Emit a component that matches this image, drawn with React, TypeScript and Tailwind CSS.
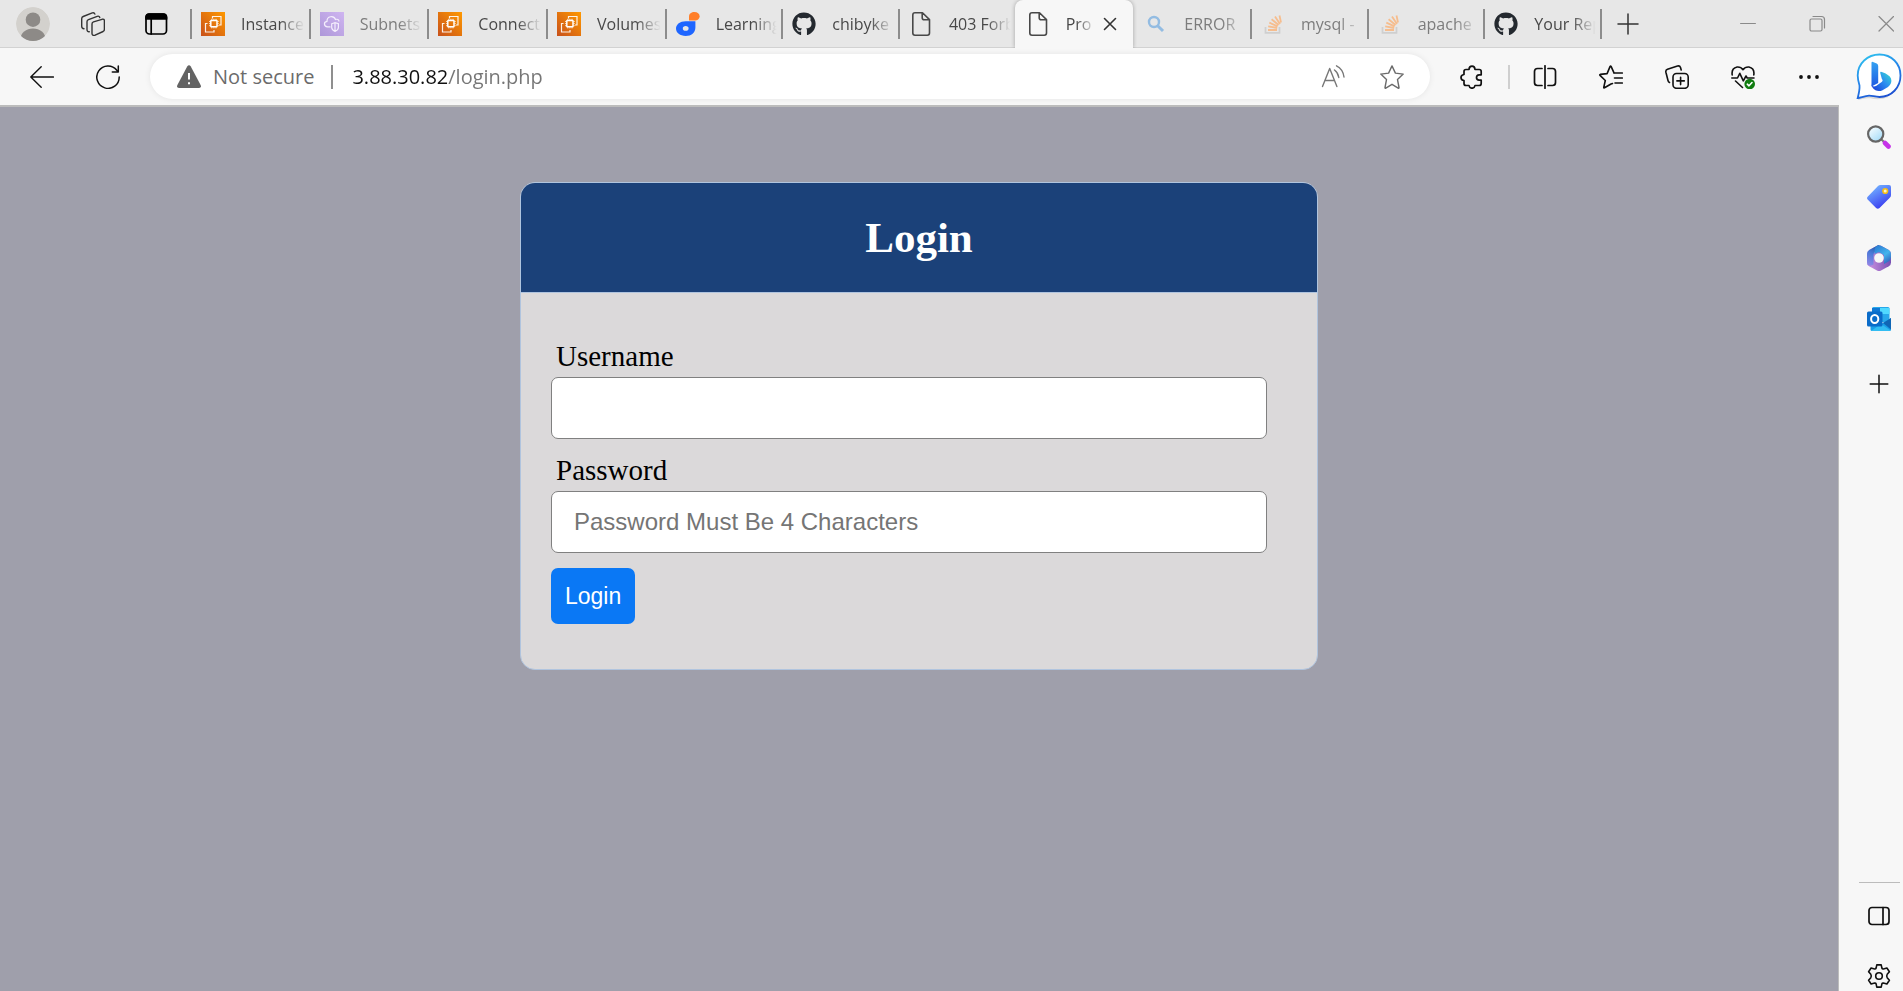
import { useState, type ReactNode } from "react";
import { FaGithub } from "react-icons/fa";

type SvgProps = { children: ReactNode; size?: string; box?: string; stroke?: string };

function Line({ children, size = "size-6", box = "0 0 24 24", stroke = "1.5" }: SvgProps) {
  return (
    <svg
      className={`${size} shrink-0`}
      viewBox={box}
      fill="none"
      stroke="currentColor"
      strokeWidth={stroke}
      strokeLinecap="round"
      strokeLinejoin="round"
      aria-hidden="true"
    >
      {children}
    </svg>
  );
}

function Ec2Icon() {
  return (
    <svg className="size-6" viewBox="0 0 24 24" fill="none" aria-hidden="true">
      <defs>
        <linearGradient id="ec2" x1="0" y1="24" x2="24" y2="0" gradientUnits="userSpaceOnUse">
          <stop stopColor="#c8511b" />
          <stop offset="1" stopColor="#ff9900" />
        </linearGradient>
      </defs>
      <rect width="24" height="24" fill="url(#ec2)" />
      <path d="M11.5 6.500V4.500H20V13h-2M6.500 11.500h-2V20H13v-2" stroke="#fff" strokeOpacity=".9" strokeWidth="1.200" />
      <rect x="9.800" y="8.500" width="6.200" height="6.200" rx=".5" stroke="#fff" strokeWidth="1.500" />
      <path
        d="M10.800 8V6.800M12.900 8V6.800M15 8V6.800M10.800 16.400v-1.200M12.900 16.400v-1.200M15 16.400v-1.200M9.300 9.500H8.100M9.300 11.600H8.100M9.300 13.700H8.100M17.700 9.500h-1.200M17.700 11.600h-1.200M17.700 13.700h-1.200"
        stroke="#fff"
        strokeWidth=".8"
      />
    </svg>
  );
}

function VpcIcon() {
  return (
    <svg className="size-6" viewBox="0 0 24 24" fill="none" aria-hidden="true">
      <defs>
        <linearGradient id="vpc" x1="0" y1="24" x2="24" y2="0" gradientUnits="userSpaceOnUse">
          <stop stopColor="#ad97d8" />
          <stop offset="1" stopColor="#cfb5f1" />
        </linearGradient>
      </defs>
      <rect width="24" height="24" fill="url(#vpc)" />
      <path
        d="M10.500 14.800H7.600C3.500 14.500 3.500 9.800 7 9.300 6.800 4 13.700 3 15.500 7.500 17.500 6.800 18.900 7.800 19 9.500"
        stroke="#f4eefc"
        strokeWidth="1.200"
      />
      <path d="M11.700 11.700 15 10.700 18.400 11.700V15.500C18.400 17.500 16.700 18.700 15 19.400 13.400 18.700 11.700 17.500 11.700 15.500ZM15 11V19" stroke="#f4eefc" strokeWidth="1.200" />
    </svg>
  );
}

function LearnIcon() {
  return (
    <svg className="size-6" viewBox="0 0 24 24" aria-hidden="true">
      <path d="M13 4.500C13 1.700 15.500 0 18.400 0 21.500 0 23.600 1.700 23.600 4.200 23.600 7 21.300 8.500 18.500 8.500H13Z" fill="#ff7f2a" />
      <path
        fillRule="evenodd"
        d="M9.700 9.200H19.400V15.500C19.400 20.500 15.300 24 9.700 24 4 24 0 21 0 16.600 0 12.300 4 9.200 9.700 9.200ZM9.700 14.100C7.900 14.100 6.800 15 6.800 16.400S7.900 18.800 9.700 18.800 12.600 17.800 12.600 16.400 11.500 14.100 9.700 14.100Z"
        fill="#1f66ff"
      />
    </svg>
  );
}

function GithubIcon() {
  return <FaGithub className="size-6 text-[#24292f]" aria-hidden="true" />;
}

function PageIcon() {
  return (
    <Line stroke="1.6">
      <path d="M6 .8h7.500l7 6.800v13.400q0 2.200-2.200 2.200H6q-2.200 0-2.200-2.200V3Q3.800.8 6 .8ZM13.200 1v4.800q0 2 2 2h5" />
    </Line>
  );
}

function SearchTabIcon() {
  return (
    <svg className="size-6" viewBox="0 0 24 24" fill="none" stroke="#93bce2" aria-hidden="true">
      <circle cx="10" cy="10" r="5" strokeWidth="2.400" />
      <path d="m13.700 13.700 5.300 5.300" strokeWidth="3" />
    </svg>
  );
}

function StackIcon() {
  return (
    <svg className="size-6" viewBox="0 0 24 24" fill="none" aria-hidden="true">
      <path d="M4.500 15v5.800h14V15" stroke="#cfcfcf" strokeWidth="1.700" />
      <path
        d="M7 18h9M7.200 14.300l9 1.700M8.300 10.600l8.300 3.800M10.600 7.200l7 5.800M14 4.600l5 7.400M18.500 3.500l1.500 7"
        stroke="#f6bd8e"
        strokeWidth="1.800"
      />
    </svg>
  );
}

type Tab = { title: string; icon: ReactNode; active?: boolean; faded?: boolean; wide?: boolean };

const tabs: Tab[] = [
  { title: "Instances", icon: <Ec2Icon />, wide: true },
  { title: "Subnets", icon: <VpcIcon />, faded: true, wide: true },
  { title: "Connect", icon: <Ec2Icon />, wide: true },
  { title: "Volumes", icon: <Ec2Icon />, wide: true },
  { title: "Learning", icon: <LearnIcon /> },
  { title: "chibyke", icon: <GithubIcon /> },
  { title: "403 Forb", icon: <PageIcon /> },
  { title: "Pro", icon: <PageIcon />, active: true, wide: true },
  { title: "ERROR", icon: <SearchTabIcon />, faded: true },
  { title: "mysql -", icon: <StackIcon />, faded: true },
  { title: "apache", icon: <StackIcon />, faded: true },
  { title: "Your Rep", icon: <GithubIcon /> },
];

function Divider() {
  return <span className="h-[30px] w-[2px] shrink-0 bg-[#8c8c8c]" />;
}

function TabStrip() {
  return (
    <header className="flex h-12 shrink-0 bg-[#e7e7e7] shadow-[inset_0_-1px_0_#d2d2d2]">
      <div className="flex shrink-0 items-center pl-4 text-[#333]">
        <button aria-label="Profile" className="size-[34px]">
          <svg viewBox="0 0 34 34" aria-hidden="true">
            <defs>
              <clipPath id="avatar">
                <circle cx="17" cy="17" r="17" />
              </clipPath>
            </defs>
            <g clipPath="url(#avatar)">
              <circle cx="17" cy="17" r="17" fill="#d3d1cd" />
              <circle cx="17" cy="12.700" r="7.300" fill="#8d8a87" />
              <ellipse cx="17" cy="32" rx="12.500" ry="10.500" fill="#8d8a87" />
            </g>
          </svg>
        </button>
        <button aria-label="Workspaces" className="ml-[31px]">
          <Line stroke="1.400">
            <path d="M11 12q0-1.600 1.500-2.100l8.500-2.600q2.400-.6 2.400 1.700v8.300q0 1.500-1.300 2.200l-8 3.700Q11 24 11 21.600ZM8.300 19.800Q6 20 6 17.600V9.800q0-1.600 1.500-2.200l8.700-3.300q2-.6 2.600 1.200M3 16.700Q.7 16.700.7 14.300V6.700q0-1.600 1.500-2.200L11.300.9q2-.6 2.600 1.200" />
          </Line>
        </button>
        <button aria-label="Tab actions" className="ml-[39px] text-black">
          <Line stroke="1.700">
            <rect x="2" y="2" width="20.500" height="20" rx="3.500" />
            <path d="M2 7V5q0-3 3-3h14.500q3 0 3 3v2Z" fill="currentColor" />
            <path d="M7.200 7v15" />
          </Line>
        </button>
        <span className="w-[22px]" />
      </div>
      <nav className="flex min-w-0 max-w-[1410px] flex-1 items-stretch" aria-label="Tabs">
        {tabs.map((tab, i) => (
          <div
            key={i}
            className={`flex min-w-0 items-center ${tab.wide ? "flex-[119]" : "flex-[117]"} ${
              tab.active
                ? "z-10 rounded-t-lg bg-[#f7f7f7] shadow-[0_0_4px_rgba(0,0,0,0.3)] [clip-path:inset(-2px_-4px_0_-4px)]"
                : ""
            }`}
          >
            {tab.active || tabs[i - 1]?.active ? <span className="w-[2px] shrink-0" /> : <Divider />}
            <a
              href="#"
              className={`ml-[9px] flex min-w-0 flex-1 items-center gap-4 ${tab.faded ? "text-[#7c7c7c]" : "text-[#484848]"}`}
            >
              <span className="shrink-0">{tab.icon}</span>
              <span
                className={`min-w-0 flex-1 overflow-hidden text-base leading-6 whitespace-nowrap ${
                  tab.active
                    ? "[mask-image:linear-gradient(to_right,black_40%,transparent_120%)]"
                    : "[mask-image:linear-gradient(to_right,black_60%,transparent_98%)]"
                }`}
              >
                {tab.title}
              </span>
            </a>
            {tab.active ? (
              <button aria-label="Close tab" className="mr-4 ml-3 text-[#333]">
                <Line size="size-[14px]" box="0 0 14 14" stroke="1.600">
                  <path d="m1.500 1.500 11 11m0-11-11 11" />
                </Line>
              </button>
            ) : (
              <span className="w-[3px] shrink-0" />
            )}
          </div>
        ))}
      </nav>
      <div className="flex items-center">
        <Divider />
      </div>
      <button aria-label="New tab" className="ml-[14px] text-[#333]">
        <Line stroke="1.500">
          <path d="M12 2v20M2 12h20" />
        </Line>
      </button>
      <div className="ml-auto flex shrink-0 items-center gap-[52px] pr-[9px] text-[#8a8a8a]">
        <button aria-label="Minimize">
          <Line size="size-4" box="0 0 16 16" stroke="1.200">
            <path d="M.6 7.500h14.800" />
          </Line>
        </button>
        <button aria-label="Restore">
          <Line size="size-[18px]" box="0 0 18 18" stroke="1.200">
            <rect x="2" y="4" width="12" height="12" rx="1.500" />
            <path d="M5 1.500h8.500q3 0 3 3V13" />
          </Line>
        </button>
        <button aria-label="Close window">
          <Line size="size-4" box="0 0 16 16" stroke="1.200">
            <path d="m1 .5 14.500 14.500m0-14.500L1 15" />
          </Line>
        </button>
      </div>
    </header>
  );
}

function Toolbar() {
  return (
    <div className="flex h-[57px] shrink-0 items-center bg-[#f7f7f7] pr-[18px] text-[#111]">
      <button aria-label="Back" className="ml-[30px]">
        <Line stroke="1.400">
          <path d="M.8 12h22.600M11.200 1.800.8 12l10.400 10.200" />
        </Line>
      </button>
      <button aria-label="Refresh" className="ml-[42px]">
        <Line stroke="1.500">
          <path d="M23.200 12A11.200 11.200 0 1 1 20.800 5.200L22.300 7M22.300 1v6h-6" />
        </Line>
      </button>
      <div className="ml-[30px] flex h-[45px] min-w-0 flex-1 items-center rounded-full bg-white pr-[26px] pl-[27px] text-xl shadow-[0_0_6px_rgba(0,0,0,0.08)]">
        <button className="flex shrink-0 items-center gap-3 text-[#6b6b6b]">
          <svg className="size-6" viewBox="0 0 24 24" aria-hidden="true">
            <path d="M10.200 1.500q1.800-2.600 3.600 0L23.600 20q1.200 3-1.600 3H2q-2.800 0-1.600-3Z" fill="#636363" />
            <path d="M12 8v6.500M12 17.300v2" stroke="#fff" strokeWidth="2" />
          </svg>
          Not secure
        </button>
        <span className="mr-[19px] ml-[17px] h-6 w-[2px] shrink-0 bg-[#8f8f8f]" />
        <input
          aria-label="Address"
          defaultValue="3.88.30.82/login.php"
          className="min-w-0 flex-1 bg-linear-[to_right,#111_95px,#757575_95px] bg-clip-text text-transparent outline-none"
        />
        <button aria-label="Read aloud" className="text-[#777]">
          <Line stroke="1.400">
            <path d="M1.500 21.500 8.700 3.500l7.200 18M4 15.500h9.500M13.500 5q3.500 2.500 4.300 7.500M15.500.8q6.500 3.200 7.500 11.200" />
          </Line>
        </button>
        <button aria-label="Add to favorites" className="ml-[35px] text-[#6b6b6b]">
          <Line stroke="1.400">
            <path d="m12 .9 3.400 7.200 7.800 1-5.700 5.500 1.500 7.900q.1 1-.8.6L12 19.300l-6.200 3.800q-.9.4-.8-.6l1.500-7.900L.8 9.100l7.800-1Z" />
          </Line>
        </button>
      </div>
      <button aria-label="Extensions" className="ml-[30px]">
        <Line stroke="1.700">
          <path d="M6 4.500h3q.2-3.300 3-3.300t3 3.300h4.200q2 0 2 2v3.300h-2q-2.700.3-2.700 2.700t2.700 2.700h2v3.300q0 2-2 2H15q-.4 2.700-3 2.700t-3-2.700H6q-2 0-2-2v-3q-3-.3-3-3t3-3v-3q0-2 2-2Z" />
        </Line>
      </button>
      <span className="mr-[23px] ml-6 h-6 w-[2px] shrink-0 bg-[#cfcfcf]" />
      <div className="flex shrink-0 items-center gap-[42px]">
        <button aria-label="Split screen">
          <Line stroke="1.700">
            <path d="M9 3.500H4.500q-3 0-3 3v11q0 3 3 3H9M15 3.500h4.500q3 0 3 3v11q0 3-3 3H15M12 .8v22.500" />
          </Line>
        </button>
        <button aria-label="Favorites">
          <Line stroke="1.600">
            <path d="M13.500 18.500 12 19l-6.500 3.800q-.9.300-.7-.6l1.500-6.700L1 10.400q-.5-.7.300-1l6.800-.8 2.900-7q.6-1 1.200 0l2.900 6.500M15.500 13h7.800M15.500 8h7.800M16 18h7.300" />
          </Line>
        </button>
        <button aria-label="Collections">
          <Line stroke="1.600">
            <rect x="8" y="8.500" width="15.200" height="14.800" rx="3.500" />
            <path d="M15.600 12.200v7.400M11.900 15.900h7.400M4.500 17.500Q3.300 17 3 15.500L.9 7.200q-.5-2.200 1.600-3L12.500 1q2.300-.6 3 1.500l.7 2.500" />
          </Line>
        </button>
        <button aria-label="Browser essentials">
          <Line stroke="1.600">
            <path d="M1.200 10q-1-6.700 4.900-8 3.800-.3 5.900 2.700 2.100-3 5.900-2.700 5.900 1.300 4.900 8M.8 13h5.700l2.300-4.700 3.500 7.500 2.700-4.800 1.200 2h6.800M4.500 16l7 6.500" />
            <circle cx="18.700" cy="19" r="5.300" fill="#107c10" stroke="none" />
            <path d="m16.300 19.200 1.700 1.600 3-3.300" stroke="#fff" />
          </Line>
        </button>
        <button aria-label="Settings and more">
          <svg className="size-6" viewBox="0 0 24 24" fill="currentColor" aria-hidden="true">
            <circle cx="4" cy="12" r="1.900" />
            <circle cx="12" cy="12" r="1.900" />
            <circle cx="20" cy="12" r="1.900" />
          </svg>
        </button>
      </div>
    </div>
  );
}

function LoginPage() {
  const [user, setUser] = useState("");
  const [pass, setPass] = useState("");
  const field =
    "h-[62px] w-full rounded-[7px] border border-[#808080] bg-white px-[22px] font-['Liberation_Sans',Arial,sans-serif] text-2xl text-black outline-none placeholder:text-[#757575]";
  return (
    <main className="flex-1 border-t-2 border-r border-[#bcbcbc] bg-[#9f9fab] px-4 pt-[75px] font-['Liberation_Serif','Times_New_Roman',serif]">
      <section className="mx-auto w-full max-w-[798px] overflow-hidden rounded-[15px] border border-[#b0c4de] bg-[#dbd9da]">
        <h1 className="border-b border-[#b0c4de] bg-[#1b4179] py-[30px] text-center text-[43px] leading-[49px] font-bold text-white">
          Login
        </h1>
        <form className="pt-[46px] pr-[50px] pb-[45px] pl-[30px]" onSubmit={(e) => e.preventDefault()}>
          <label htmlFor="username" className="mb-1 block pl-[5px] text-[29px] leading-[34px] text-black">
            Username
          </label>
          <input id="username" className={field} value={user} onChange={(e) => setUser(e.target.value)} />
          <label htmlFor="password" className="mt-[14px] mb-1 block pl-[5px] text-[29px] leading-[34px] text-black">
            Password
          </label>
          <input
            id="password"
            type="password"
            placeholder="Password Must Be 4 Characters"
            className={field}
            value={pass}
            onChange={(e) => setPass(e.target.value)}
          />
          <button
            type="submit"
            className="mt-[15px] block h-14 rounded-[7px] bg-[#0a78f5] px-[14px] font-['Liberation_Sans',Arial,sans-serif] text-[23px] leading-7 text-white"
          >
            Login
          </button>
        </form>
      </section>
    </main>
  );
}

function BingIcon() {
  return (
    <svg className="size-12" viewBox="0 0 48 48" fill="none" aria-hidden="true">
      <defs>
        <linearGradient id="bubble" x1="10" y1="2" x2="30" y2="46" gradientUnits="userSpaceOnUse">
          <stop stopColor="#2fc3ee" />
          <stop offset=".5" stopColor="#2484ea" />
          <stop offset="1" stopColor="#1d4fd0" />
        </linearGradient>
        <linearGradient id="stem" x1="18" y1="9" x2="20" y2="38" gradientUnits="userSpaceOnUse">
          <stop stopColor="#35a4f2" />
          <stop offset="1" stopColor="#1a50e0" />
        </linearGradient>
        <linearGradient id="bowl" x1="18" y1="36" x2="36" y2="20" gradientUnits="userSpaceOnUse">
          <stop stopColor="#1b48db" />
          <stop offset=".5" stopColor="#2b8df0" />
          <stop offset="1" stopColor="#38dfd0" />
        </linearGradient>
      </defs>
      <path d="M3 47q9-2 12-2 9 3 18-1" stroke="#000" strokeOpacity=".12" strokeWidth="2" />
      <path
        d="M24.500 2.500C36.500 2.500 45.500 11.500 45.500 23.500S36.500 45 24.500 45C20 45 17 43.500 14 43.700 10 44 6 45.500 2.700 46 4 41 4.800 37 4.500 33.500 3.500 30 2.700 27 2.700 23.500 2.700 11.500 12.500 2.500 24.500 2.500Z"
        fill="#fff"
        stroke="url(#bubble)"
        strokeWidth="1.800"
      />
      <path d="M16.500 10.500q.2-1 1.500-.6l3.700 1.700q1.500.8 1.500 2.500V31l-6.700 3.500Z" fill="url(#stem)" />
      <path d="M16.500 31.500q.5 4 4.500 2.500l6-4.200q1.500-1.300-.2-3l-1.500-5.500q-.5-2 1.500-1.200 7.500 2.500 9.200 6.500 1.500 5-3 8.400l-5.500 3.200q-3.500 1.700-7 .1-4-2-4-6.800Z" fill="url(#bowl)" />
    </svg>
  );
}

function MagnifierIcon() {
  return (
    <svg className="size-6" viewBox="0 0 24 24" fill="none" aria-hidden="true">
      <defs>
        <linearGradient id="glass" x1="4" y1="3" x2="14" y2="15" gradientUnits="userSpaceOnUse">
          <stop stopColor="#f2fbff" />
          <stop offset="1" stopColor="#a7dcf8" />
        </linearGradient>
      </defs>
      <path d="m14 14 4 4" stroke="#777" strokeWidth="2" />
      <path d="m18 18 3.500 3.500" stroke="#c633e8" strokeWidth="4.600" strokeLinecap="round" />
      <circle cx="8.700" cy="9" r="7.600" fill="url(#glass)" stroke="#666" strokeWidth="2.200" />
    </svg>
  );
}

function TagIcon() {
  return (
    <svg className="size-6" viewBox="0 0 24 24" aria-hidden="true">
      <defs>
        <linearGradient id="tag" x1="4" y1="4" x2="15" y2="23" gradientUnits="userSpaceOnUse">
          <stop stopColor="#6fabff" />
          <stop offset="1" stopColor="#3a3df0" />
        </linearGradient>
      </defs>
      <path d="M13.500 0h8.500q2 0 2 2v8q0 1.500-1 2.500L12.500 23q-1.700 1.600-3.400 0L.9 14.800q-1.700-1.600 0-3.300L11 1q1-1 2.500-1Z" fill="url(#tag)" />
      <circle cx="18.200" cy="6" r="2.300" fill="#fff3c4" stroke="#f4bd18" strokeWidth="1.600" />
    </svg>
  );
}

function M365Icon() {
  return (
    <svg className="size-[26px]" viewBox="0 0 26 26" aria-hidden="true">
      <defs>
        <linearGradient id="m1" x1="3" y1="19" x2="11" y2="3" gradientUnits="userSpaceOnUse">
          <stop stopColor="#8a86e4" />
          <stop offset=".6" stopColor="#4a7ad8" />
          <stop offset="1" stopColor="#2c5fae" />
        </linearGradient>
        <linearGradient id="m2" x1="11" y1="3" x2="23" y2="19" gradientUnits="userSpaceOnUse">
          <stop stopColor="#2f86d8" />
          <stop offset=".5" stopColor="#45b4ec" />
          <stop offset="1" stopColor="#3158b8" />
        </linearGradient>
        <linearGradient id="m3" x1="4" y1="20" x2="24" y2="18" gradientUnits="userSpaceOnUse">
          <stop stopColor="#c58bdc" />
          <stop offset="1" stopColor="#7a52b4" />
        </linearGradient>
      </defs>
      <path d="M11 .8q2-1 4 0L22.800 5Q25 6.300 25 9v8.500q0 2.500-2.200 3.800L15 25.500q-2 1-4 0L3.200 21.300Q1 20 1 17.500V9q0-2.700 2.200-4Z" fill="url(#m3)" />
      <path d="M11 .8 3.200 5Q1 6.300 1 9v8.500Q1 20 3 20.500q2.500.5 4.500-1V10q0-2.500 2-3.800L13 4V.1Q12 .1 11 .8Z" fill="url(#m1)" />
      <path d="M11 .8Q8.500 2.500 8.500 5.500V9L13 7l5 3v9l4.500-2.500Q25 15 25 12V9q0-2.700-2.200-4L15 .8q-2-1-4 0Z" fill="url(#m2)" />
      <circle cx="13" cy="13" r="4.800" fill="#f7f7f7" />
    </svg>
  );
}

function OutlookIcon() {
  return (
    <svg className="size-6" viewBox="0 0 24 24" aria-hidden="true">
      <path d="M5 1.500Q5 0 6.500 0H21q1.500 0 1.500 1.500V15H5Z" fill="#28a8ea" />
      <path d="M13 1h9.500v6H13Z" fill="#50d9ff" />
      <path d="M5 1h8v5H5Z" fill="#0f78d4" />
      <path d="M3.500 12 14 17l10-6v11.500q0 1.500-1.500 1.500H5q-1.500 0-1.500-1.500Z" fill="#1aa0e8" />
      <path d="m16 16 8-5v11.500Z" fill="#1066b5" />
      <path d="M4 24 14 17l9.500 6.500-1 .5Z" fill="#33bdf2" />
      <rect y="4.500" width="15.500" height="15" rx="1.500" fill="#0a6cc9" />
      <ellipse cx="7.700" cy="12" rx="3.600" ry="4" fill="none" stroke="#fff" strokeWidth="2" />
    </svg>
  );
}

function Sidebar() {
  return (
    <aside className="flex w-16 shrink-0 flex-col bg-[#f7f7f7] pt-1 pl-4 text-[#111]">
      <div className="flex flex-col items-center">
        <button aria-label="Bing chat">
          <BingIcon />
        </button>
        <div className="mt-[25px] flex flex-col items-center gap-9">
          <button aria-label="Search">
            <MagnifierIcon />
          </button>
          <button aria-label="Shopping">
            <TagIcon />
          </button>
          <button aria-label="Microsoft 365">
            <M365Icon />
          </button>
          <button aria-label="Outlook">
            <OutlookIcon />
          </button>
        </div>
        <button aria-label="Customize sidebar" className="mt-[41px]">
          <Line stroke="1.500">
            <path d="M12 3.200v17.600M3.200 12h17.600" />
          </Line>
        </button>
      </div>
      <div className="mt-auto flex flex-col items-center pb-[3px]">
        <span className="mb-[21px] h-px w-[41px] bg-[#bcbcbc]" />
        <button aria-label="Hide sidebar">
          <Line stroke="1.700">
            <rect x="2" y="3.500" width="20" height="17" rx="3" />
            <path d="M16 3.500v17" />
          </Line>
        </button>
        <button aria-label="Settings" className="mt-9">
          <Line stroke="1.600">
            <circle cx="12" cy="12" r="3.300" />
            <path d="M9.800.9h4.400l.7 3.200q.4 1 1.500.8l3.500-.9 2.500 3.700-2.200 2.600q-1 1.700 0 3.400l2.200 2.600-2.500 3.700-3.500-.9q-1.100-.2-1.500.8l-.7 3.200H9.800l-.7-3.200q-.4-1-1.500-.8l-3.500.9-2.500-3.700 2.200-2.600q1-1.700 0-3.400L1.600 7.700 4.100 4l3.500.9q1.100.2 1.500-.8Z" />
          </Line>
        </button>
      </div>
    </aside>
  );
}

export default function App() {
  return (
    <div className="flex min-h-screen flex-col bg-[#f7f7f7] font-['Open_Sans','Noto_Sans',sans-serif]">
      <TabStrip />
      <div className="flex flex-1">
        <div className="flex min-w-0 flex-1 flex-col">
          <Toolbar />
          <LoginPage />
        </div>
        <Sidebar />
      </div>
    </div>
  );
}
